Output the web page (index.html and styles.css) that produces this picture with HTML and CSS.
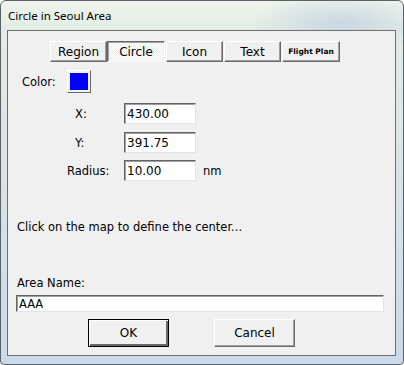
FILE: index.html
```html
<!DOCTYPE html>
<html lang="en">
<head>
    <meta charset="UTF-8">
    <title>Circle in Seoul Area</title>
    <link rel="stylesheet" href="styles.css">
</head>
<body>
<div class="window">
    <div class="titlebar">Circle in Seoul Area</div>
    <div class="client">
        <div class="tabs">
            <button class="tab">Region</button>
            <button class="tab active">Circle</button>
            <button class="tab">Icon</button>
            <button class="tab">Text</button>
            <button class="tab small">Flight Plan</button>
        </div>
        <div class="color-row">
            <span class="color-label">Color:</span>
            <button class="swatch"><span></span></button>
        </div>
        <div class="field-row first">
            <label class="lbl lbl-xy">X:</label>
            <input class="field" type="text" value="430.00">
        </div>
        <div class="field-row">
            <label class="lbl lbl-xy">Y:</label>
            <input class="field" type="text" value="391.75">
        </div>
        <div class="field-row radius">
            <label class="lbl lbl-radius">Radius:</label>
            <input class="field" type="text" value="10.00">
            <span class="unit">nm</span>
        </div>
        <p class="message">Click on the map to define the center...</p>
        <p class="area-label">Area Name:</p>
        <input class="area-input" type="text" value="AAA">
        <div class="buttons">
            <button class="btn default">OK</button>
            <button class="btn">Cancel</button>
        </div>
    </div>
</div>
</body>
</html>
```

FILE: styles.css
```css
body {
    margin: 0;
    padding: 0;
    background: #ffffff;
    font-family: 'DejaVu Sans', sans-serif;
    font-size: 11.5px;
    color: #000;
}
.window {
    width: 402px;
    height: 363px;
    border: 1px solid #5a6168;
    border-radius: 6px 6px 4px 4px;
    background:
        radial-gradient(ellipse 90px 30px at 340px 22px, rgba(170, 185, 220, 0.45), rgba(170, 185, 220, 0) 100%),
        linear-gradient(to bottom, #eef4ec 0, #e2ece4 30px, #cbd9ea 100%);
    display: flex;
    flex-direction: column;
}
.titlebar {
    height: 29px;
    padding-left: 7px;
    line-height: 29px;
    font-family: 'Noto Sans', sans-serif;
    font-size: 11.5px;
    color: #000;
}
.client {
    margin: 0 7px 0 6px;
    height: 324px;
    border: 1px solid #6e6e6e;
    background: #f0f0f0;
}
button, input {
    font-family: 'DejaVu Sans', sans-serif;
    font-size: 11.5px;
    color: #000;
    margin: 0;
    box-sizing: border-box;
}
.tabs {
    display: flex;
    margin: 10px 0 0 42px;
}
.tab {
    width: 57px;
    height: 21px;
    padding: 0;
    background: #f0f0f0;
    border: 1px solid;
    border-color: #ffffff #696969 #696969 #ffffff;
    box-shadow: inset -1px -1px 0 #a0a0a0;
    font-size: 12px;
}
.tab.active {
    width: 58px;
    border-color: #696969 #ffffff #ffffff #696969;
    box-shadow: inset 1px 1px 0 #a0a0a0;
    background: repeating-conic-gradient(#ffffff 0 25%, #ececec 0 50%) 0 0 / 2px 2px;
}
.tab.small {
    width: 58px;
    font-size: 7.5px;
    font-weight: bold;
}
.tab:nth-child(n+3) {
    margin-left: 1px;
}
.color-row {
    display: flex;
    align-items: center;
    margin-top: 8px;
    height: 23px;
}
.color-label {
    margin-left: 14px;
    width: 45px;
}
.swatch {
    width: 24px;
    height: 23px;
    padding: 2px;
    background: #f0f0f0;
    border: 1px solid;
    border-color: #ffffff #696969 #696969 #ffffff;
}
.swatch span {
    display: block;
    width: 100%;
    height: 100%;
    background: #0000ff;
}
.field-row {
    display: flex;
    align-items: center;
    margin-top: 8px;
}
.field-row.first {
    margin-top: 10px;
}
.field-row.radius {
    margin-top: 7px;
}
.lbl {
    width: 116px;
    box-sizing: border-box;
}
.lbl-xy {
    padding-left: 67px;
}
.lbl-radius {
    padding-left: 59px;
}
.field {
    width: 72px;
    height: 21px;
    padding: 1px 2px 0;
    background: #fff;
    border: 1px solid;
    border-color: #646464 #e3e3e3 #e3e3e3 #646464;
    box-shadow: inset 1px 1px 0 #a0a0a0;
    font-size: 12px;
}
.unit {
    margin-left: 7px;
}
.message {
    margin: 39px 0 0 9px;
    line-height: 14px;
}
.area-label {
    margin: 42px 0 0 9px;
    line-height: 14px;
}
.area-input {
    display: block;
    margin: 5px 0 0 8px;
    width: 368px;
    height: 17px;
    padding: 0 2px;
    background: #fff;
    border: 1px solid;
    border-color: #646464 #e3e3e3 #e3e3e3 #646464;
    box-shadow: inset 1px 1px 0 #a0a0a0;
}
.buttons {
    display: flex;
    gap: 45px;
    margin: 7px 0 0 80px;
}
.btn {
    width: 81px;
    height: 28px;
    background: #f0f0f0;
    border: 1px solid;
    border-color: #ffffff #696969 #696969 #ffffff;
    box-shadow: inset -1px -1px 0 #a0a0a0;
    font-size: 12px;
}
.btn.default {
    border: 1px solid #000;
    box-shadow: inset 1px 1px 0 #ffffff, inset -2px -2px 0 #696969;
}
```
